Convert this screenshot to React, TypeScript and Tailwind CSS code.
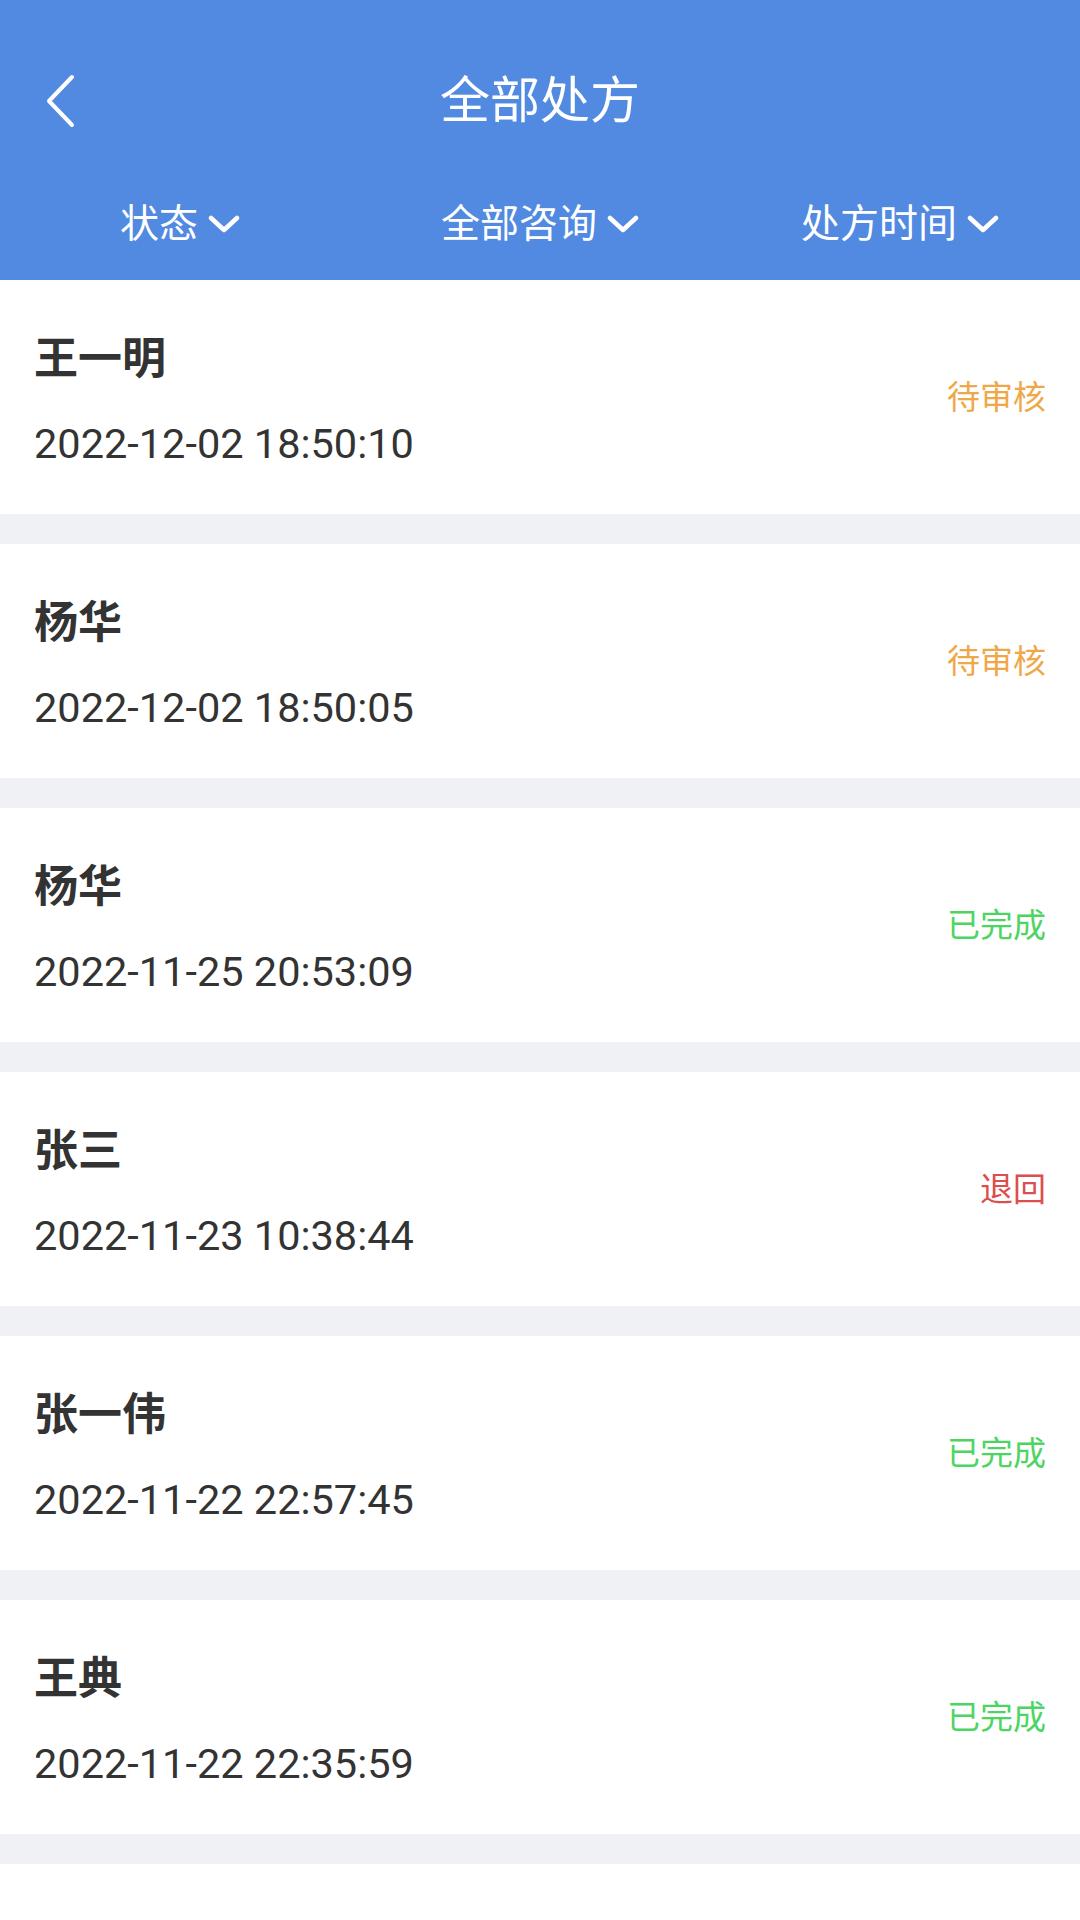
interface Prescription {
  name: string;
  time: string;
  status: "pending" | "done" | "returned";
}

const items: Prescription[] = [
  { name: "王一明", time: "2022-12-02 18:50:10", status: "pending" },
  { name: "杨华", time: "2022-12-02 18:50:05", status: "pending" },
  { name: "杨华", time: "2022-11-25 20:53:09", status: "done" },
  { name: "张三", time: "2022-11-23 10:38:44", status: "returned" },
  { name: "张一伟", time: "2022-11-22 22:57:45", status: "done" },
  { name: "王典", time: "2022-11-22 22:35:59", status: "done" },
];

const statusText = {
  pending: "待审核",
  done: "已完成",
  returned: "退回",
};

const statusColor = {
  pending: "text-[#EFA849]",
  done: "text-[#4CD563]",
  returned: "text-[#DB4F4C]",
};

const filters = ["状态", "全部咨询", "处方时间"];

function BackIcon() {
  return (
    <svg width="36" height="56" viewBox="0 0 36 56" fill="none">
      <path
        d="M31 4 L8 28 L31 52"
        stroke="white"
        strokeWidth="4"
        strokeLinecap="round"
        strokeLinejoin="round"
      />
    </svg>
  );
}

function DownIcon() {
  return (
    <svg width="32" height="20" viewBox="0 0 32 20" fill="none">
      <path
        d="M3 4 L16 16 L29 4"
        stroke="white"
        strokeWidth="4.5"
        strokeLinecap="round"
        strokeLinejoin="round"
      />
    </svg>
  );
}

export default function App() {
  return (
    <div className="min-h-screen bg-white font-['Roboto','Noto_Sans_CJK_SC',sans-serif]">
      {/* Header */}
      <header className="bg-[#528AE1] pb-[28px] text-white">
        <div className="grid h-[196px] grid-cols-[150px_1fr_150px] items-center pt-[6px]">
          <button className="flex items-center pl-[41px]" aria-label="返回">
            <BackIcon />
          </button>
          <h1 className="text-center text-[50px] leading-none">全部处方</h1>
          <div />
        </div>

        <div className="grid h-[56px] grid-cols-3 items-center">
          {filters.map((f) => (
            <button key={f} className="flex items-center justify-center gap-[10px]">
              <span className="text-[39px] leading-none">{f}</span>
              <DownIcon />
            </button>
          ))}
        </div>
      </header>

      {/* List */}
      <div className="flex flex-col gap-[30px] bg-[#F0F1F5]">
        {items.map((item, i) => (
          <div
            key={i}
            className="flex h-[234px] items-center justify-between bg-white px-[34px]"
          >
            <div className="flex flex-col self-start pt-[55px] text-[#333333]">
              <span className="text-[44px] font-bold leading-[48px]">{item.name}</span>
              <span className="mt-[37px] text-[41.5px] leading-[48px]">{item.time}</span>
            </div>
            <span className={`text-[33px] leading-none ${statusColor[item.status]}`}>
              {statusText[item.status]}
            </span>
          </div>
        ))}
        <div className="h-[80px] bg-white" />
      </div>
    </div>
  );
}
